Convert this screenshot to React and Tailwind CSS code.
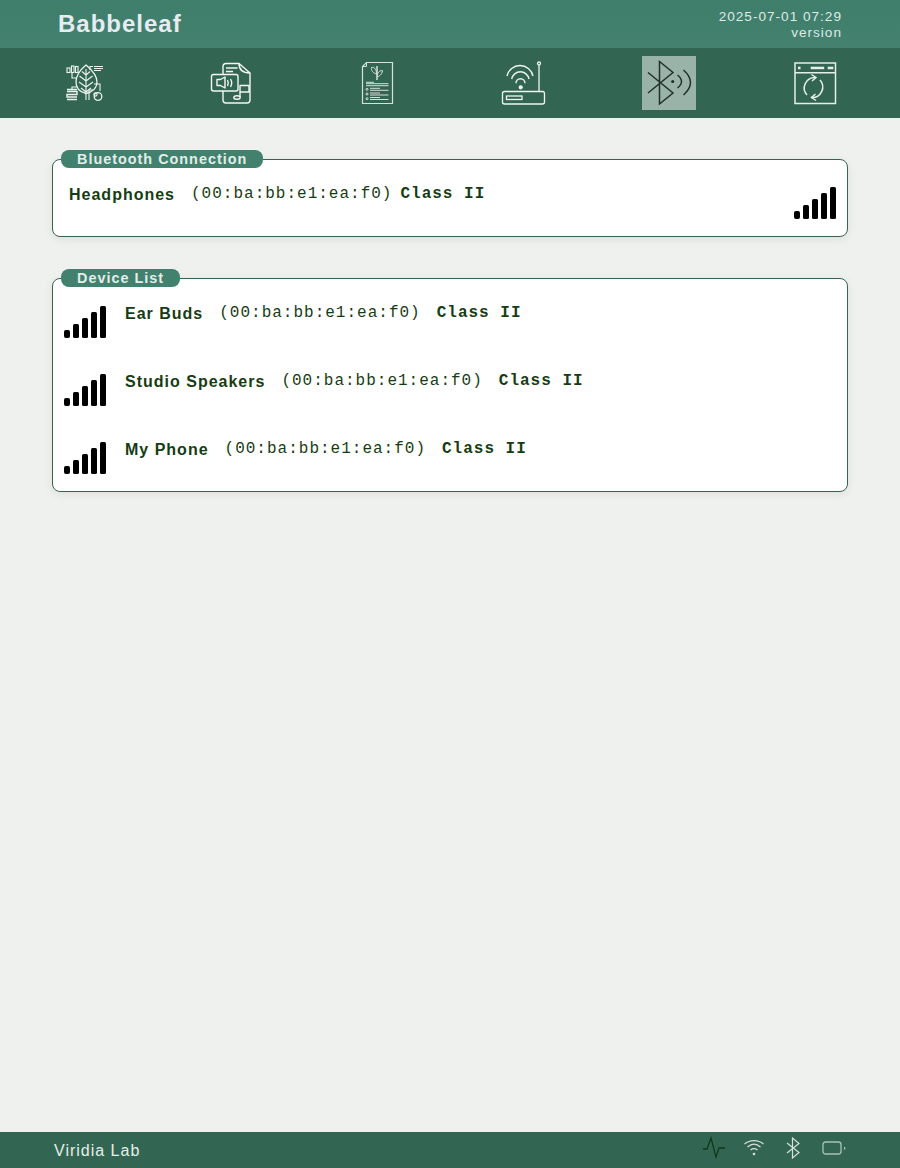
import React from "react";

const devices = [
  { name: "Ear Buds", mac: "(00:ba:bb:e1:ea:f0)", kind: "Class II" },
  { name: "Studio Speakers", mac: "(00:ba:bb:e1:ea:f0)", kind: "Class II" },
  { name: "My Phone", mac: "(00:ba:bb:e1:ea:f0)", kind: "Class II" },
];

function Signal() {
  return (
    <div className="flex items-end gap-[3px] h-[32px] mt-[1px] shrink-0">
      <div className="w-[6px] h-[8px] bg-black rounded-[2px]"></div>
      <div className="w-[6px] h-[14px] bg-black rounded-[1.5px]"></div>
      <div className="w-[6px] h-[20px] bg-black rounded-[1.5px]"></div>
      <div className="w-[6px] h-[26px] bg-black rounded-[1.5px]"></div>
      <div className="w-[6px] h-[32px] bg-black rounded-[1.5px]"></div>
    </div>
  );
}

function Card({ title, children, className }) {
  return (
    <section className={"relative bg-white border border-[#336652] rounded-lg shadow-[0_2px_10px_rgba(0,0,0,0.08)] " + className}>
      <div className="absolute -top-[10px] left-2 h-[18px] px-4 rounded-[8px] bg-[#41816d] text-[#e3edea] text-[14.4px] leading-[18px] font-bold tracking-[1px]">
        {title}
      </div>
      {children}
    </section>
  );
}

function LeafIcon() {
  return (
    <svg width="54" height="54" viewBox="0 0 54 54" fill="none" stroke="#eef3f0" strokeWidth="1.100">
      <path d="M28 9C22 14 18 20 18 26C18 32 22 36 28 37.500C34 36 39 32 39 26C39 20 34 14 28 9Z" strokeWidth="1.300" />
      <path d="M28 13V44M28 19L24 15.500M28 19L32 15.500M28 25L21.500 20M28 25L34.500 20M28 31L21 26M28 31L35 26M28 36L23 32M28 36L33 32" />
      <rect x="9" y="12" width="3" height="4.500" />
      <rect x="13.500" y="10" width="2.500" height="6.500" />
      <rect x="17.500" y="10.500" width="2.500" height="6" />
      <path d="M32 14V10.500H35" />
      <path d="M36 10.500H45M36 12.500H45M36 14.500H43" />
      <path d="M14 17V22H19" />
      <path d="M14 33V31H20" />
      <path d="M9 33.500H19M9 35.500H19V38.500H9V41H19M9 43.500H19" strokeWidth="1.400" />
      <path d="M31 44V34H35M36 28H42V35" />
      <circle cx="40" cy="40.500" r="3.800" strokeWidth="1.300" />
      <circle cx="37.500" cy="38.500" r="1.600" />
    </svg>
  );
}

function AudioDocIcon() {
  return (
    <svg width="54" height="54" viewBox="1 0 54 54" fill="none" stroke="#f4f7f5" strokeWidth="1.400" strokeLinejoin="round">
      <path d="M20 18V11C20 8.500 21 7.500 23 7.500H36L47 17V44C47 46 46 47 44 47H23C21 47 20 46 20 44V35" />
      <path d="M36 7.500C36 13 39 17 47 17" />
      <path d="M23 12H34.500M23 15.500H30" />
      <rect x="8.500" y="18.500" width="26.500" height="16.500" rx="2" />
      <path d="M14 23.500H17.500L22 21V32L17.500 29.500H14Z" />
      <path d="M24.500 24C25.500 26 25.500 28 24.500 30M27.500 23C29 25.500 29 28.500 27.500 31" />
      <path d="M37 41V29.500H46V36H37" />
      <ellipse cx="34" cy="41.500" rx="3.200" ry="1.800" />
    </svg>
  );
}

function PlantDocIcon() {
  return (
    <svg width="54" height="54" viewBox="1 0 54 54" fill="none" stroke="#d5e1dc" strokeWidth="1">
      <path d="M17.500 6.500H43.500V47.500H13.500V10.500Z" strokeWidth="1.200" />
      <path d="M13.500 10.500H17.500V6.500" />
      <path d="M28 24V10" strokeWidth="1.500" />
      <path d="M27.500 18C24 17 22 14.500 22.500 11.500C24.500 11 27.500 12 27.500 18Z" />
      <path d="M28.500 21C30 20 33 19 33.500 14.500C30 14.500 28 17 28.500 21Z" />
      <path d="M17 26.300H25" />
      <path d="M17 27.700H39.500M17 29.700H39.500" />
      <path d="M21 32.300H31M21 34.300H39.500M21 37H31M21 39H39.500M21 41.500H31M21 43.500H39.500" />
      <circle cx="18" cy="33.300" r="1" />
      <circle cx="18" cy="38" r="1" />
      <circle cx="18" cy="42.700" r="1" />
    </svg>
  );
}

function RouterIcon() {
  return (
    <svg width="54" height="54" viewBox="1 0 54 54" fill="none" stroke="#f0f4f2" strokeWidth="1.300">
      <rect x="7.500" y="35.500" width="42" height="12.500" rx="2" />
      <rect x="11.500" y="40" width="15.500" height="3.500" />
      <path d="M44 35.500V9" />
      <circle cx="44" cy="7.500" r="1.500" />
      <circle cx="25.700" cy="31.300" r="1.500" fill="#f0f4f2" />
      <path d="M21 27.300A4.500 4.500 0 0 1 30 27.300M16.700 23A8.800 8.800 0 0 1 34 23M12 20A13.300 13.300 0 0 1 38 20" strokeWidth="1.400" />
    </svg>
  );
}

function BluetoothIcon() {
  return (
    <svg width="54" height="54" viewBox="0 0 54 54" fill="none" stroke="#22302a" strokeWidth="1.500">
      <path d="M6 16.500L31 37L17.500 48V5.500L31 16.500L6 37" />
      <circle cx="30.700" cy="25.500" r="1.600" fill="#22302a" stroke="none" />
      <path d="M35.500 19Q43.500 25.500 35.500 32" />
      <path d="M41.500 14Q55.500 26.500 41.500 39" />
    </svg>
  );
}

function WindowSyncIcon() {
  return (
    <svg width="54" height="54" viewBox="0 0 54 54" fill="none" stroke="#e6eeea" strokeWidth="1.500">
      <rect x="7" y="7" width="40.500" height="40.500" />
      <path d="M7 16.700H47.500" />
      <rect x="10" y="10.700" width="2.500" height="2.500" fill="#e6eeea" stroke="none" />
      <rect x="22.700" y="10.700" width="13.500" height="2.500" fill="#e6eeea" stroke="none" />
      <rect x="39.700" y="10.700" width="5.600" height="2.500" fill="#e6eeea" stroke="none" />
      <path d="M27 21.500A10.500 10.500 0 0 0 19 39" />
      <path d="M23.500 41.500A10.500 10.500 0 0 0 32 24" />
      <path d="M23.500 18.500L28 21.500L24 25M28 44.500L23.500 41.500L27.500 38" />
    </svg>
  );
}

export default function App() {
  return (
    <div className="flex flex-col h-screen bg-[#eff1ee] font-['Liberation_Sans',sans-serif]">
      {/* header */}
      <header className="flex items-center justify-between h-[48px] px-[58px] bg-gradient-to-b from-[#3e7e6a] to-[#44826f]">
        <h1 className="text-[24px] leading-[28px] font-bold tracking-[1px] text-[#e6edf2]">Babbeleaf</h1>
        <div className="text-right text-[13.6px] leading-[16px] tracking-[1px] text-[#dfe9e5] mt-[1px]">
          <div>2025-07-01 07:29</div>
          <div>version</div>
        </div>
      </header>

      {/* nav icons */}
      <nav className="grid grid-cols-6 items-center h-[70px] px-3 bg-[#336652]">
        <div className="justify-self-center w-[54px] h-[54px]"><LeafIcon /></div>
        <div className="justify-self-center w-[54px] h-[54px]"><AudioDocIcon /></div>
        <div className="justify-self-center w-[54px] h-[54px]"><PlantDocIcon /></div>
        <div className="justify-self-center w-[54px] h-[54px]"><RouterIcon /></div>
        <div className="justify-self-center w-[54px] h-[54px] bg-[#9ab3a9]"><BluetoothIcon /></div>
        <div className="justify-self-center w-[54px] h-[54px]"><WindowSyncIcon /></div>
      </nav>

      {/* main */}
      <main className="flex-1 flex flex-col gap-[41px] pt-[41px] px-[52px]">
        <Card title="Bluetooth Connection" className="flex justify-between pt-[26px] pb-[17px] pl-[16px] pr-[11px]">
          <div className="flex text-[16px] leading-[18px] tracking-[1px] text-[#163c14]">
            <span className="font-bold">Headphones</span>
            <span className="ml-4 -mt-[1px] font-['Liberation_Mono',monospace]">(00:ba:bb:e1:ea:f0)</span>
            <span className="ml-2 -mt-[1px] font-bold font-['Liberation_Mono',monospace]">Class II</span>
          </div>
          <Signal />
        </Card>

        <Card title="Device List" className="flex flex-col gap-[35px] pt-[26px] pb-[17px] pl-[11px]">
          {devices.map((d) => (
            <div key={d.name} className="flex gap-[19px]">
              <Signal />
              <div className="flex text-[16px] leading-[18px] tracking-[1px] text-[#163c14]">
                <span className="font-bold">{d.name}</span>
                <span className="ml-4 -mt-[1px] font-['Liberation_Mono',monospace]">{d.mac}</span>
                <span className="ml-4 -mt-[1px] font-bold font-['Liberation_Mono',monospace]">{d.kind}</span>
              </div>
            </div>
          ))}
        </Card>
      </main>

      {/* footer */}
      <footer className="flex items-center justify-between h-[36px] pl-[54px] pr-[54px] bg-[#336652]">
        <span className="text-[16px] tracking-[1px] text-[#e6eeea] mt-[2px]">Viridia Lab</span>
        <div className="flex items-center mb-[4px]">
          <svg width="24" height="24" viewBox="0 0 24 24" fill="none" stroke="#0f3a1c" strokeWidth="1.300">
            <path d="M1 13H5L9 2L14 21L17 12H23" />
          </svg>
          <svg width="22" height="22" viewBox="0 0 22 22" fill="none" stroke="#d5e1dc" strokeWidth="1.200" className="ml-[17px]">
            <path d="M1.500 7C7 2.500 15 2.500 20.500 7M4.500 10C8.500 6.500 13.500 6.500 17.500 10M7.500 13C9.500 11.500 12.500 11.500 14.500 13" />
            <circle cx="11" cy="17" r="1.300" fill="#d5e1dc" stroke="none" />
          </svg>
          <svg width="16" height="24" viewBox="0 0 16 24" fill="none" stroke="#d5e1dc" strokeWidth="1.200" className="ml-[20px]">
            <path d="M2 7L14 16.500L7.500 22V2L14 7.500L2 17" />
          </svg>
          <svg width="24" height="16" viewBox="0 0 24 16" fill="none" className="ml-[21px]">
            <rect x="1" y="2" width="18" height="12" rx="2.500" stroke="#a9c1b8" strokeWidth="1.300" />
            <rect x="22" y="7" width="1.300" height="2.500" fill="#a9c1b8" />
          </svg>
        </div>
      </footer>
    </div>
  );
}
